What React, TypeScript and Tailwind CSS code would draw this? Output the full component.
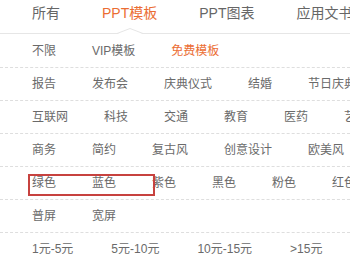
import React from "react";

const rows: { items: string[]; active?: number; wide?: boolean }[] = [
  { items: ["不限", "VIP模板", "免费模板"], active: 2 },
  { items: ["报告", "发布会", "庆典仪式", "结婚", "节日庆典"] },
  { items: ["互联网", "科技", "交通", "教育", "医药", "艺术"] },
  { items: ["商务", "简约", "复古风", "创意设计", "欧美风"] },
  { items: ["绿色", "蓝色", "紫色", "黑色", "粉色", "红色"] },
  { items: ["普屏", "宽屏"] },
  { items: ["1元-5元", "5元-10元", "10元-15元", ">15元"], wide: true },
];

const tabs = ["所有", "PPT模板", "PPT图表", "应用文书"];

export default function App() {
  return (
    <div
      className="relative w-[350px] h-[260px] overflow-hidden bg-white"
      style={{ fontFamily: '"Liberation Sans", "Noto Sans CJK SC", sans-serif' }}
    >
      {/* header tabs */}
      <div className="relative h-[34px] border-b border-[#e6e6e6]">
        <div className="flex items-center h-[26px] pl-[11px] whitespace-nowrap">
          {tabs.map((t, i) => (
            <React.Fragment key={t}>
              {i > 0 && <div className="w-px h-[15px] bg-[#e4e4e4]" />}
              <div
                className={
                  "px-[21px] text-[14px] leading-[26px] " +
                  (i === 1 ? "text-[#eb6d33]" : "text-[#666]")
                }
              >
                {t}
              </div>
            </React.Fragment>
          ))}
        </div>
        <svg
          className="absolute left-[117px] top-[28px]"
          width="26"
          height="7"
          viewBox="0 0 26 7"
        >
          <polygon points="0,6 13,1 26,6" fill="#fff" />
          <polyline points="0,5.5 13,0.5 26,5.5" fill="none" stroke="#e6e6e6" strokeWidth="1" />
        </svg>
      </div>

      {/* filter rows */}
      <div className="flex flex-col pt-px">
        {rows.map((r, ri) => (
          <div
            key={ri}
            className={
              "flex items-center h-[33px] pl-[32px] border-b border-dashed border-[#dedede] whitespace-nowrap text-[12px] " +
              (r.wide ? "gap-[38px]" : "gap-[36px]")
            }
          >
            {r.items.map((it, ii) => (
              <span
                key={it}
                className={r.active === ii ? "text-[#eb6d33]" : "text-[#6a6a6a]"}
              >
                {it}
              </span>
            ))}
          </div>
        ))}
      </div>

      {/* red annotation box */}
      <div className="absolute left-[28px] top-[174px] w-[127px] h-[22px] border-2 border-[#c7423f]" />
    </div>
  );
}
